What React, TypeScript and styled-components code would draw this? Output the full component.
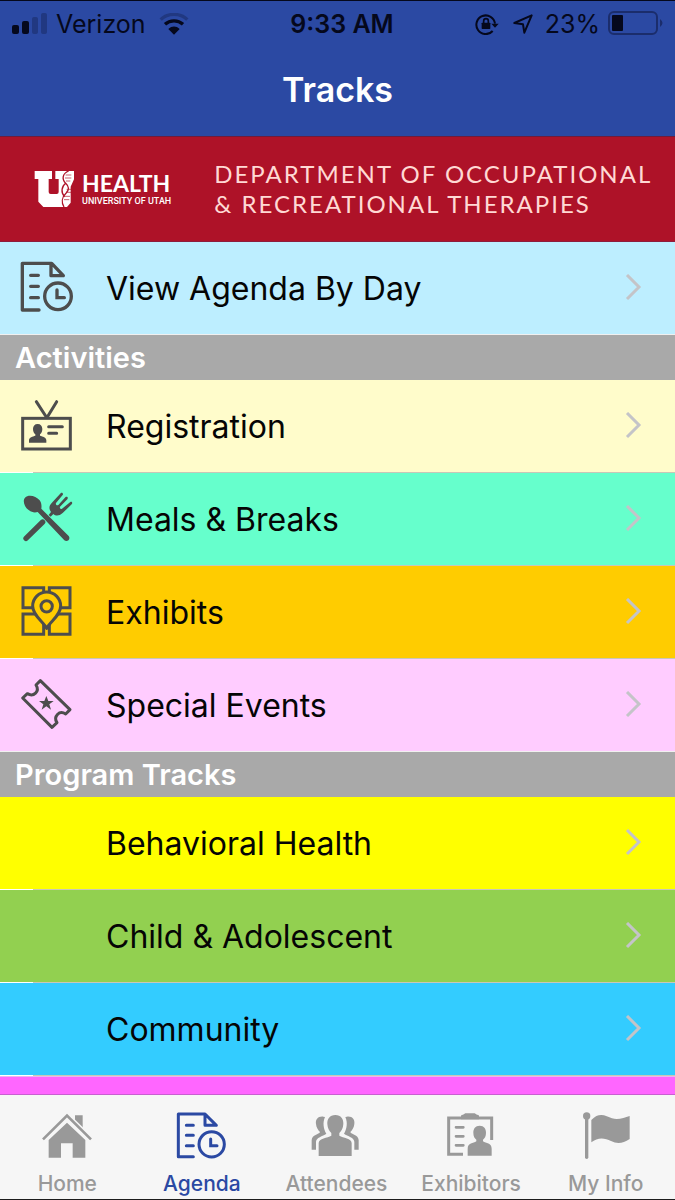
import React from "react";
import styled, { createGlobalStyle } from "styled-components";

const GlobalStyle = createGlobalStyle`
  *, *::before, *::after { box-sizing: border-box; }
  html, body { margin: 0; padding: 0; }
  body { font-family: Inter, "Liberation Sans", sans-serif; color: #050505; }
`;

const Screen = styled.div`
  display: flex;
  flex-direction: column;
  height: 100vh;
  background: #fff;
  border-top: 1px solid #05081c;
  border-bottom: 1px solid #1c1c1c;
`;

const TopBar = styled.header`
  flex: none;
  background: #2b49a3;
  color: #05081c;
`;

const StatusBar = styled.div`
  display: grid;
  grid-template-columns: 1fr auto 1fr;
  align-items: center;
  height: 45px;
  padding: 0 11px 0 12px;
  font-size: 25px;
  line-height: 30px;
`;

const StatusGroup = styled.div<{ $end?: boolean }>`
  display: flex;
  align-items: center;
  gap: 8px;
  justify-content: ${(p) => (p.$end ? "flex-end" : "flex-start")};
`;

const StatusIcons = styled.span`
  display: flex;
  align-items: center;
  gap: 14px;
  margin-right: 4px;
`;

const Clock = styled.time`
  font-weight: 600;
  padding-left: 8px;
`;

const Wifi = styled.svg`
  margin-left: 5px;
`;

const Title = styled.h1`
  margin: 0;
  height: 90px;
  line-height: 88px;
  text-align: center;
  font-size: 34px;
  font-weight: 600;
  color: #fff;
`;

const Banner = styled.section`
  flex: none;
  display: flex;
  align-items: center;
  gap: 43px;
  height: 106px;
  padding-left: 34px;
  background: #ae1228;
  border-top: 1px solid #6f1c3c;
  border-bottom: 1px solid #8e1c3c;
  color: #fff;
`;

const Logo = styled.div`
  display: flex;
  align-items: center;
  gap: 8px;
`;

const LogoText = styled.div`
  display: flex;
  flex-direction: column;
  white-space: nowrap;
`;

const LogoName = styled.span`
  font-family: Lato, sans-serif;
  font-weight: 700;
  font-size: 23px;
  line-height: 25px;
`;

const LogoSub = styled.span`
  font-family: Roboto, sans-serif;
  font-weight: 500;
  font-size: 9px;
  line-height: 11px;
`;

const Department = styled.p`
  margin: 0;
  font-family: Lato, sans-serif;
  font-weight: 400;
  font-size: 24px;
  line-height: 30px;
  letter-spacing: 2px;
  white-space: nowrap;
  color: #ffd9d4;
`;

const Content = styled.main`
  flex: 1;
  min-height: 0;
  display: flex;
  flex-direction: column;
  overflow: hidden;
`;

const SectionTitle = styled.h2`
  flex: none;
  margin: 0;
  height: 45px;
  padding-left: 15px;
  line-height: 46px;
  font-size: 29px;
  font-weight: 600;
  color: #fff;
  background: #a9a9a9;
`;

const List = styled.ul`
  flex: none;
  margin: 0;
  padding: 0;
  list-style: none;
`;

const Item = styled.li<{ $last?: boolean }>`
  background: #fff;
  &::after {
    content: "";
    display: block;
    height: 1px;
    margin-left: ${(p) => (p.$last ? 0 : 33)}px;
    background: ${(p) => (p.$last ? "#f0f0f0" : "#c8c7b8")};
  }
`;

const RowLink = styled.a<{ $color: string }>`
  display: grid;
  grid-template-columns: 54px 1fr auto;
  column-gap: 32px;
  align-items: center;
  height: 92px;
  padding: 0 33px 0 20px;
  font-size: 32px;
  line-height: 40px;
  color: inherit;
  text-decoration: none;
  background: ${(p) => p.$color};
`;

const RowLabel = styled.span`
  padding-top: 2px;
`;

const RowIcon = styled.span`
  display: flex;
  width: 54px;
  height: 54px;
  color: #4d4d4d;
`;

const NextRow = styled.div`
  flex: 1;
  background: #ff66ff;
  border-top: 1px solid #e9b6ee;
  border-bottom: 1px solid #c85fd0;
`;

const TabBar = styled.nav`
  flex: none;
  display: grid;
  grid-template-columns: repeat(5, 1fr);
  height: 104px;
  padding-right: 2px;
  background: #f6f6f6;
`;

const Tab = styled.a<{ $active?: boolean }>`
  display: flex;
  flex-direction: column;
  align-items: center;
  gap: 12px;
  padding-top: 15px;
  font-size: 21px;
  font-weight: 500;
  line-height: 24px;
  text-decoration: none;
  color: ${(p) => (p.$active ? "#2b49a3" : "#999")};
`;

const AgendaIcon = () => (
  <svg width="54" height="54" viewBox="60 61 162 162" fill="none" stroke="currentColor" strokeWidth="10">
    <path d="M117 208H67V68H155L190 105H153V68" strokeLinejoin="round" strokeLinecap="round" />
    <path d="M92 104H115M92 137H115M92 171H115M171 148V171H193" strokeLinecap="round" />
    <circle cx="174" cy="167" r="40" />
  </svg>
);

const BadgeIcon = () => (
  <svg width="54" height="54" viewBox="60 476 162 162" fill="none" stroke="currentColor" strokeWidth="9">
    <path d="M109 484L139 530H142L170 484" strokeLinecap="round" />
    <rect x="68" y="534" width="143" height="92" />
    <path d="M146 559H187M146 579H170" strokeLinecap="round" />
    <path
      fill="currentColor"
      stroke="none"
      d="M113 551C122 551 127 557 127 566C127 574 124 579 120 582V586C128 589 139 590 139 600V607H87V600C87 590 98 589 106 586V582C102 579 99 574 99 566C99 557 104 551 113 551Z"
    />
  </svg>
);

const MealsIcon = () => (
  <svg width="54" height="54" viewBox="60 64 162 162" fill="currentColor">
    <path d="M75 81C86 70 108 76 119 89C125 97 125 106 124 114L206 196C213 205 202 216 193 209L113 124C104 127 95 125 87 119C73 109 67 90 75 81Z" />
    <path d="M128 154L78 203" stroke="currentColor" strokeWidth="16" strokeLinecap="round" />
    <path d="M146 133L153 124C146 115 147 105 155 97L182 68C186 64 191 69 188 73L168 97C166 102 170 106 175 103L196 80C201 76 206 81 202 86L180 108C178 113 182 117 186 114L210 95C215 91 219 96 215 101L188 127C178 136 168 137 160 130L152 138Z" />
  </svg>
);

const ExhibitsIcon = () => (
  <svg width="54" height="54" viewBox="60 343 162 162" fill="none" stroke="currentColor" strokeWidth="9">
    <path d="M69 351H131V411H69ZM148 351H210V411H148ZM69 430H131V491H69ZM148 430H210V491H148Z" />
    <path
      d="M140 473C131 453 98 435 98 406A42 42 0 0 1 182 406C182 435 149 453 140 473Z"
      fill="#fc0"
      strokeLinejoin="round"
    />
    <circle cx="140" cy="407" r="17" />
  </svg>
);

const TicketIcon = () => (
  <svg width="54" height="54" viewBox="60 622 162 162" fill="none" stroke="currentColor" strokeWidth="9" strokeLinejoin="round">
    <path d="M121 630L210 717L197 730C178 717 159 738 171 756L156 770L68 682L82 669C101 680 120 662 108 643Z" />
    <path
      fill="currentColor"
      stroke="none"
      d="M139 676L145 691H161L148 701L153 717L139 707L125 717L130 701L117 691H133Z"
    />
  </svg>
);

const Chevron = () => (
  <svg width="17" height="28" viewBox="0 0 17 28" fill="none" stroke="#c4c4c8" strokeWidth="3">
    <path d="M2 1L14 13L2 25" />
  </svg>
);

const HomeIcon = () => (
  <svg width="54" height="50" viewBox="122 150 162 150" fill="currentColor">
    <path d="M227 166H250V212L227 190Z" />
    <path d="M131 238L203 168L275 238" fill="none" stroke="#f6f6f6" strokeWidth="18" />
    <path d="M131 238L203 167L275 238" fill="none" stroke="currentColor" strokeWidth="8" />
    <path d="M203 188L258 240V293H220V250H185V293H148V240Z" />
  </svg>
);

const AgendaTabIcon = () => (
  <svg width="54" height="50" viewBox="527 150 162 150" fill="none" stroke="currentColor" strokeWidth="9">
    <path d="M582 290H537V162H617L651 196H617V162" strokeLinejoin="round" strokeLinecap="round" />
    <path d="M561 196H582M561 226H582M561 257H582M634 237V257H653" strokeLinecap="round" />
    <circle cx="637" cy="253" r="38" />
  </svg>
);

const AttendeesIcon = () => (
  <svg width="54" height="50" viewBox="181 150 162 150" fill="currentColor">
    <path d="M224 170C208 168 200 179 202 192C203 203 208 210 214 216C211 224 190 224 189 240V269H202V246C202 232 222 229 233 221C225 208 221 188 229 171Z" />
    <path d="M295 170C311 168 319 179 317 192C316 203 311 210 305 216C308 224 329 224 330 240V269H317V246C317 232 297 229 286 221C294 208 298 188 290 171Z" />
    <path d="M260 165C277 165 285 177 284 192C283 205 279 213 272 219V227C283 234 309 234 309 249V288H210V249C210 234 237 234 248 227V219C241 213 237 205 236 192C235 177 243 165 260 165Z" />
  </svg>
);

const ExhibitorsIcon = () => (
  <svg width="54" height="50" viewBox="106 150 162 150" fill="currentColor">
    <path d="M163 283H120V174H249V240" fill="none" stroke="currentColor" strokeWidth="9" />
    <path d="M157 178V168Q157 164 163 164L170 160H198L205 164Q211 164 211 168V178Z" />
    <path d="M142 202H164M142 229H164M142 256H164" stroke="currentColor" strokeWidth="8" strokeLinecap="round" />
    <path d="M213 197C226 197 232 206 232 218C232 229 228 235 223 239V244C232 251 249 248 249 266V287H177V266C177 248 194 251 203 244V239C198 235 194 229 194 218C194 206 200 197 213 197Z" />
  </svg>
);

const FlagIcon = () => (
  <svg width="54" height="50" viewBox="511 150 162 150" fill="currentColor">
    <circle cx="534" cy="168" r="11" />
    <path d="M534 170V292" stroke="currentColor" strokeWidth="10" strokeLinecap="round" />
    <path d="M548 180C572 154 592 168 610 175C628 180 646 174 663 168V237C642 251 625 252 607 243C588 233 567 231 548 247Z" />
  </svg>
);

const SignalIcon = () => (
  <svg width="36" height="22" viewBox="0 0 36 22" fill="currentColor">
    <rect x="0" y="12" width="7" height="9" rx="2" />
    <rect x="10" y="8" width="7" height="13" rx="2" />
    <rect x="20" y="4" width="6" height="17" rx="2" opacity=".25" />
    <rect x="29" y="0" width="6" height="21" rx="2" opacity=".25" />
  </svg>
);

const WifiIcon = () => (
  <Wifi width="30" height="22" viewBox="0 0 90 66" fill="none" stroke="currentColor" strokeWidth="10">
    <path d="M5 20C26 -1 64 -1 85 20" opacity=".25" />
    <path d="M18 34C33 20 57 20 72 34" />
    <path d="M45 65L28 48C38 38 52 38 62 48Z" fill="currentColor" stroke="none" />
  </Wifi>
);

const LockIcon = () => (
  <svg width="24" height="22" viewBox="0 0 72 66" fill="none" stroke="currentColor" strokeWidth="6">
    <path d="M53 54A28 28 0 1 1 60 32" />
    <path d="M49 32H71L60 44Z" fill="currentColor" stroke="none" />
    <rect x="20" y="29" width="26" height="19" rx="2" fill="currentColor" stroke="none" />
    <path d="M26 30V24A7 7 0 0 1 40 24V30" strokeWidth="5" />
  </svg>
);

const LocationIcon = () => (
  <svg width="20" height="20" viewBox="0 0 60 60" fill="none" stroke="currentColor" strokeWidth="6" strokeLinejoin="round">
    <path d="M56 4L4 27L30 31L34 56Z" />
  </svg>
);

const BatteryIcon = () => (
  <svg width="56" height="25" viewBox="0 0 56 25">
    <rect x="1" y="1" width="48" height="22" rx="5" fill="none" stroke="#1b2d6c" strokeWidth="2" />
    <rect x="4" y="4" width="11" height="16" rx="1" fill="currentColor" />
    <path d="M52 8Q57 12 52 16Z" fill="#1b2d6c" />
  </svg>
);

const UtahLogo = () => (
  <svg width="40" height="38" viewBox="104 120 120 114">
    <path
      fill="#fff"
      d="M106 123H158V147H148V186Q148 192 154 192H172Q178 192 178 186V147H168V123H224V148L214 170V218L203 231H132L117 215V147H106Z"
    />
    <path
      fill="none"
      stroke="#ae1228"
      strokeWidth="4"
      d="M208 123C190 130 186 146 199 160C210 170 210 180 200 190C187 202 186 218 194 231M199 160C186 170 184 188 196 200"
    />
    <path fill="none" stroke="#ae1228" strokeWidth="2" d="M199 135H216M197 144H216M200 153H213M202 178H215M202 187H215M196 199H212M194 209H210" />
  </svg>
);

interface Track {
  label: string;
  color: string;
  icon?: React.ReactNode;
}

const agenda: Track[] = [{ label: "View Agenda By Day", color: "#bdeeff", icon: <AgendaIcon /> }];

const activities: Track[] = [
  { label: "Registration", color: "#fffccb", icon: <BadgeIcon /> },
  { label: "Meals & Breaks", color: "#66ffcc", icon: <MealsIcon /> },
  { label: "Exhibits", color: "#ffcc00", icon: <ExhibitsIcon /> },
  { label: "Special Events", color: "#ffccff", icon: <TicketIcon /> },
];

const programs: Track[] = [
  { label: "Behavioral Health", color: "#ffff00" },
  { label: "Child & Adolescent", color: "#92d050" },
  { label: "Community", color: "#33ccff" },
];

const tabs = [
  { label: "Home", icon: <HomeIcon /> },
  { label: "Agenda", icon: <AgendaTabIcon />, active: true },
  { label: "Attendees", icon: <AttendeesIcon /> },
  { label: "Exhibitors", icon: <ExhibitorsIcon /> },
  { label: "My Info", icon: <FlagIcon /> },
];

const TrackList = ({ tracks, closed }: { tracks: Track[]; closed?: boolean }) => (
  <List>
    {tracks.map((t, i) => (
      <Item key={t.label} $last={closed && i === tracks.length - 1}>
        <RowLink href="#" $color={t.color}>
          <RowIcon>{t.icon}</RowIcon>
          <RowLabel>{t.label}</RowLabel>
          <Chevron />
        </RowLink>
      </Item>
    ))}
  </List>
);

export default function App() {
  return (
    <>
      <GlobalStyle />
      <Screen>
        <TopBar>
          <StatusBar>
            <StatusGroup>
              <SignalIcon />
              <span>Verizon</span>
              <WifiIcon />
            </StatusGroup>
            <Clock>9:33 AM</Clock>
            <StatusGroup $end>
              <StatusIcons>
                <LockIcon />
                <LocationIcon />
              </StatusIcons>
              <span>23%</span>
              <BatteryIcon />
            </StatusGroup>
          </StatusBar>
          <Title>Tracks</Title>
        </TopBar>
        <Banner>
          <Logo>
            <UtahLogo />
            <LogoText>
              <LogoName>HEALTH</LogoName>
              <LogoSub>UNIVERSITY OF UTAH</LogoSub>
            </LogoText>
          </Logo>
          <Department>
            DEPARTMENT OF OCCUPATIONAL
            <br />& RECREATIONAL THERAPIES
          </Department>
        </Banner>
        <Content>
          <TrackList tracks={agenda} closed />
          <SectionTitle>Activities</SectionTitle>
          <TrackList tracks={activities} closed />
          <SectionTitle>Program Tracks</SectionTitle>
          <TrackList tracks={programs} />
          <NextRow />
        </Content>
        <TabBar>
          {tabs.map((t) => (
            <Tab key={t.label} href="#" $active={t.active} aria-current={t.active ? "page" : undefined}>
              {t.icon}
              <span>{t.label}</span>
            </Tab>
          ))}
        </TabBar>
      </Screen>
    </>
  );
}
